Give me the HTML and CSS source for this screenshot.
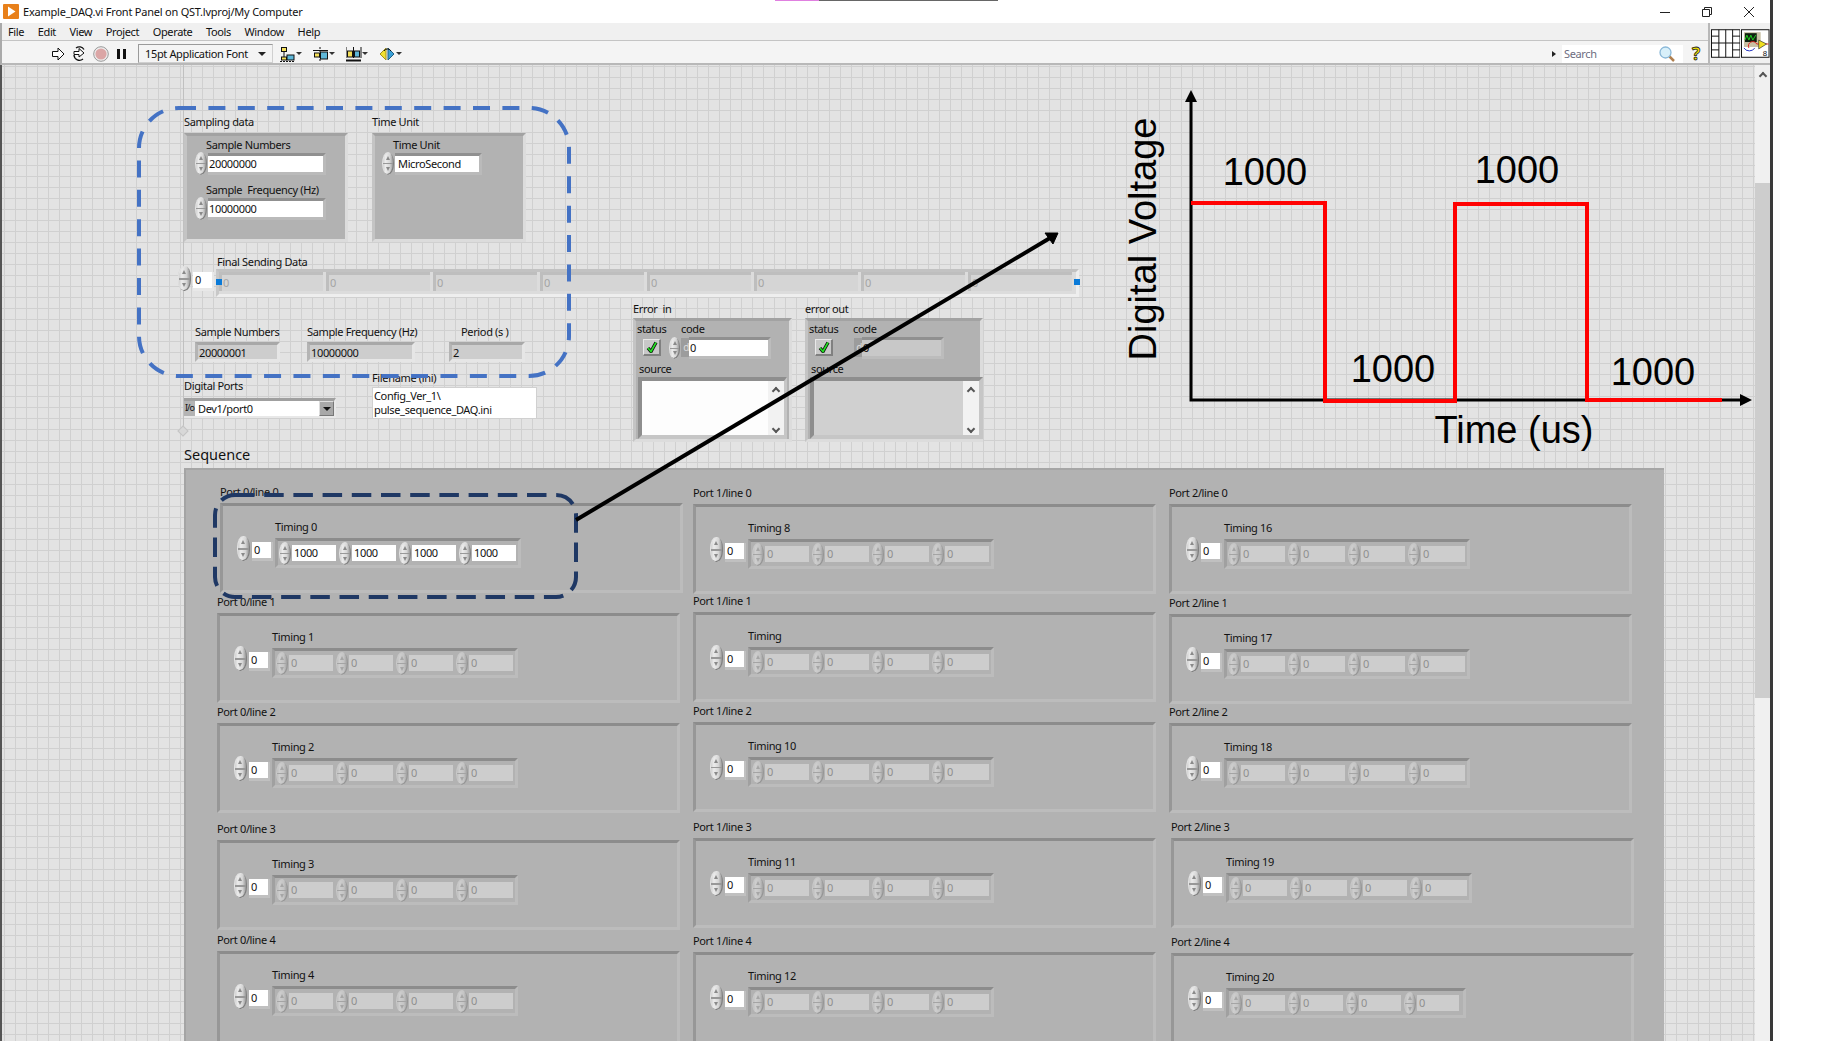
FILE: index.html
```html
<!DOCTYPE html>
<html lang="en">
<head>
    <meta charset="UTF-8">
    <title>Example_DAQ.vi Front Panel on QST.lvproj/My Computer</title>
    <link rel="stylesheet" href="styles.css">
</head>
<body>
<div class="window">
    <div class="titlebar">
        <svg class="app-icon" width="16" height="15" viewBox="0 0 16 15"><rect width="16" height="15" rx="1" fill="#e8801a"/><path d="M5 2.5 L12.5 7.5 L5 12.5 Z" fill="#fff"/></svg>
        <span class="title">Example_DAQ.vi Front Panel on QST.lvproj/My Computer</span>
        <div class="win-buttons">
            <svg width="12" height="12" viewBox="0 0 12 12"><path d="M1 6.5 H11" stroke="#222" stroke-width="1"/></svg>
            <svg width="12" height="12" viewBox="0 0 12 12"><path d="M1.5 3.5 H8.5 V10.5 H1.5 Z M3.5 3.5 V1.5 H10.5 V8.5 H8.5" fill="none" stroke="#222"/></svg>
            <svg width="12" height="12" viewBox="0 0 12 12"><path d="M1 1 L11 11 M11 1 L1 11" stroke="#222" stroke-width="1"/></svg>
        </div>
    </div>

    <div class="head">
        <div class="bars">
            <ul class="menu">
                <li>File</li><li>Edit</li><li>View</li><li>Project</li><li>Operate</li><li>Tools</li><li>Window</li><li>Help</li>
            </ul>
            <div class="toolbar">
                <svg class="tool first" width="14" height="16" viewBox="0 0 14 16"><path d="M1.5 5.5 H7 V2 L13 8 L7 14 V10.5 H1.5 Z" fill="#fff" stroke="#111"/></svg>
                <svg class="tool" width="16" height="16" viewBox="0 0 16 16"><path d="M3 5.5 H8 V2.5 L13 7 L8 11 V8.5 H3 Z" fill="#fff" stroke="#111"/><path d="M3 9 A5.5 5.5 0 0 0 12 13 M13 3.5 A5.5 5.5 0 0 0 5 2" fill="none" stroke="#111" stroke-width="1.3"/></svg>
                <svg class="tool" width="16" height="16" viewBox="0 0 16 16"><circle cx="8" cy="8" r="7.3" fill="#eee" stroke="#999"/><circle cx="8" cy="8" r="5.6" fill="#dba6a6"/></svg>
                <span class="pause"></span>
                <div class="font-select"><span>15pt Application Font</span><span class="caret"></span></div>
                <svg class="tool align" width="22" height="16" viewBox="0 0 22 16"><rect x="1.5" y="1.5" width="5" height="4" fill="#f5e05a" stroke="#111"/><rect x="1.5" y="11" width="5" height="3" fill="#f5e05a" stroke="#111"/><rect x="7" y="9" width="7" height="5" fill="#5fb7d8" stroke="#111"/><path d="M4 6 V11" stroke="#111"/><path d="M0 15.5 H15" stroke="#111" stroke-dasharray="2 1"/><path d="M16 6 H22 L19 9 Z" fill="#333"/></svg>
                <svg class="tool align" width="22" height="16" viewBox="0 0 22 16"><rect x="1.5" y="7" width="5" height="4" fill="#f5e05a" stroke="#111"/><rect x="7.5" y="6" width="7" height="7" fill="#5fb7d8" stroke="#111"/><path d="M0 4.5 H15" stroke="#111"/><path d="M7 1 V15" stroke="#111" stroke-dasharray="2 1"/><path d="M16 6 H22 L19 9 Z" fill="#333"/></svg>
                <svg class="tool align" width="22" height="16" viewBox="0 0 22 16"><rect x="1.5" y="5" width="5" height="6" fill="#f5e05a" stroke="#111"/><rect x="8.5" y="5" width="5" height="6" fill="#5fb7d8" stroke="#111"/><path d="M0 1 V12 M15 1 V12 M7.5 1 V12" stroke="#111"/><path d="M0 14.5 H15" stroke="#111" stroke-width="2"/><path d="M16 6 H22 L19 9 Z" fill="#333"/></svg>
                <svg class="tool align" width="23" height="16" viewBox="0 0 23 16"><path d="M7 2 L1 8 L7 14 Z" fill="#f0e030" stroke="#a09020"/><path d="M9 2 L15 8 L9 14 Z" fill="#3aa0d8" stroke="#206080"/><path d="M5 5 A4 4 0 0 1 12 5" fill="none" stroke="#111"/><path d="M17 6 H23 L20 9 Z" fill="#333"/></svg>
                <div class="tool-right">
                    <span class="search-arrow"></span>
                    <div class="search">
                        <span>Search</span>
                        <svg width="16" height="16" viewBox="0 0 16 16"><path d="M9.5 9.5 L15 15" stroke="#b08050" stroke-width="2.5"/><circle cx="6.5" cy="6.5" r="5.5" fill="#d8f0fa" stroke="#8ab8d8" stroke-width="1.3"/></svg>
                    </div>
                    <span class="help">?</span>
                </div>
            </div>
        </div>
        <div class="vi-icons">
            <svg width="30" height="29" viewBox="0 0 30 29"><rect x=".5" y=".5" width="29" height="28" fill="#fff" stroke="#111"/><path d="M8 .5 V28.5 M15 .5 V28.5 M22 .5 V28.5 M.5 7 H8 M.5 14 H15 M.5 21 H8 M22 7 H29.5 M22 14 H29.5 M22 21 H29.5 M15 14 H22" fill="none" stroke="#111"/></svg>
            <svg width="29" height="29" viewBox="0 0 29 29"><rect x=".5" y=".5" width="28" height="28" fill="#fff" stroke="#111"/><rect x="3" y="3" width="17" height="15" fill="#c8c0a4"/><rect x="4" y="4" width="12" height="9" fill="#102010"/><path d="M4 11 L6 6 L8 11 L10 6 L12 11 L15 6" fill="none" stroke="#20d020"/><path d="M3 19 A6 5 0 0 0 14 19" fill="none" stroke="#2030c0"/><path d="M8 19 A4 4 0 0 1 16 15 L28 15" fill="none" stroke="#e02020"/><path d="M18 11 L26 15 L18 20 Z" fill="#f0e020" stroke="#333" stroke-width=".7"/><text x="22" y="27" class="vi-num">8</text></svg>
        </div>
    </div>

    <div class="body-row">
        <div class="panel">
            <span class="origin-v"></span>
            <span class="origin-d"></span>
            <div class="upper">
                <div class="ctl c-sampling">
                    <div class="lab lab-close">Sampling data</div>
                    <div class="box box-sampling">
                        <div class="lab sub">Sample Numbers</div>
                        <div class="num-row"><span class="spin"></span><span class="num num-wide">20000000</span></div>
                        <div class="lab sub lab-gap">Sample  Frequency (Hz)</div>
                        <div class="num-row"><span class="spin"></span><span class="num num-wide">10000000</span></div>
                    </div>
                </div>
                <div class="ctl c-unit">
                    <div class="lab lab-close">Time Unit</div>
                    <div class="box box-unit">
                        <div class="lab sub">Time Unit</div>
                        <div class="num-row"><span class="spin"></span><span class="num num-unit">MicroSecond</span></div>
                    </div>
                </div>

                <div class="ctl c-final">
                    <div class="idx final-idx"><span class="spin spin-big"></span><span class="idx-box">0</span></div>
                    <div>
                        <div class="lab final-lab">Final Sending Data</div>
                        <div class="final-arr">
                            <span class="final-cell">0</span><span class="final-cell">0</span><span class="final-cell">0</span><span class="final-cell">0</span><span class="final-cell">0</span><span class="final-cell">0</span><span class="final-cell">0</span><span class="final-cell">0</span>
                            <span class="handle handle-l"></span><span class="handle handle-r"></span>
                        </div>
                    </div>
                </div>

                <div class="ctl c-ind1"><div class="lab">Sample Numbers</div><div class="ind ind-n">20000001</div></div>
                <div class="ctl c-ind2"><div class="lab">Sample Frequency (Hz)</div><div class="ind ind-f">10000000</div></div>
                <div class="ctl c-ind3"><div class="lab lab-period">Period (s )</div><div class="ind ind-p">2</div></div>

                <div class="ctl c-ports">
                    <div class="lab lab-ports">Digital Ports</div>
                    <div class="ring"><span class="ring-io">I/o</span><span class="ring-val">Dev1/port0</span><span class="ring-btn"></span></div>
                </div>
                <div class="ctl c-file">
                    <div class="lab lab-tight">Filename (ini)</div>
                    <div class="path">Config_Ver_1\<br>pulse_sequence_DAQ.ini</div>
                </div>

                <div class="ctl c-err-in">
                    <div class="lab lab-tight">Error  in</div>
                    <div class="box err-box">
                        <div class="err-top">
                            <div class="err-status"><div class="lab">status</div><span class="check"><svg width="12" height="12" viewBox="0 0 12 12"><path d="M2 7 L5 10.5 L10 1.5" fill="none" stroke="#111" stroke-width="3.4"/><path d="M2 7 L5 10.5 L10 1.5" fill="none" stroke="#22e022" stroke-width="1.6"/></svg></span></div>
                            <div>
                                <div class="lab">code</div>
                                <div class="err-code"><span class="spin spin-small"></span><span class="dtab">d</span><span class="code-val">0</span></div>
                            </div>
                        </div>
                        <div class="lab lab-source">source</div>
                        <div class="source"><div class="source-text"></div><div class="source-scroll"><span class="chev"></span><span class="chev chev-down"></span></div></div>
                    </div>
                </div>
                <div class="ctl c-err-out">
                    <div class="lab lab-tight">error out</div>
                    <div class="box err-box err-box-out">
                        <div class="err-top">
                            <div class="err-status"><div class="lab">status</div><span class="check"><svg width="12" height="12" viewBox="0 0 12 12"><path d="M2 7 L5 10.5 L10 1.5" fill="none" stroke="#111" stroke-width="3.4"/><path d="M2 7 L5 10.5 L10 1.5" fill="none" stroke="#22e022" stroke-width="1.6"/></svg></span></div>
                            <div>
                                <div class="lab">code</div>
                                <div class="err-code err-code-out"><span class="dtab">d</span><span class="code-val code-val-out">0</span></div>
                            </div>
                        </div>
                        <div class="lab lab-source">source</div>
                        <div class="source source-out"><div class="source-text source-text-out"></div><div class="source-scroll"><span class="chev"></span><span class="chev chev-down"></span></div></div>
                    </div>
                </div>
            </div>

            <div class="seq-title">Sequence</div>
            <div class="sequence">
                <!-- Port 0 -->
                <div class="cluster up1 right3">
                    <div class="lab">Port 0/line 0</div>
                    <div class="frame"><div class="idx"><span class="spin spin-big"></span><span class="idx-box">0</span></div><div><div class="lab">Timing 0</div><div class="arr"><span class="spin"></span><span class="cell cell-on">1000</span><span class="spin"></span><span class="cell cell-on">1000</span><span class="spin"></span><span class="cell cell-on">1000</span><span class="spin"></span><span class="cell cell-on">1000</span></div></div></div>
                </div>
                <div class="cluster">
                    <div class="lab">Port 0/line 1</div>
                    <div class="frame"><div class="idx"><span class="spin spin-big"></span><span class="idx-box">0</span></div><div><div class="lab">Timing 1</div><div class="arr"><span class="spin off"></span><span class="cell">0</span><span class="spin off"></span><span class="cell">0</span><span class="spin off"></span><span class="cell">0</span><span class="spin off"></span><span class="cell">0</span></div></div></div>
                </div>
                <div class="cluster">
                    <div class="lab">Port 0/line 2</div>
                    <div class="frame"><div class="idx"><span class="spin spin-big"></span><span class="idx-box">0</span></div><div><div class="lab">Timing 2</div><div class="arr"><span class="spin off"></span><span class="cell">0</span><span class="spin off"></span><span class="cell">0</span><span class="spin off"></span><span class="cell">0</span><span class="spin off"></span><span class="cell">0</span></div></div></div>
                </div>
                <div class="cluster down2">
                    <div class="lab">Port 0/line 3</div>
                    <div class="frame"><div class="idx"><span class="spin spin-big"></span><span class="idx-box">0</span></div><div><div class="lab">Timing 3</div><div class="arr"><span class="spin off"></span><span class="cell">0</span><span class="spin off"></span><span class="cell">0</span><span class="spin off"></span><span class="cell">0</span><span class="spin off"></span><span class="cell">0</span></div></div></div>
                </div>
                <div class="cluster up1">
                    <div class="lab">Port 0/line 4</div>
                    <div class="frame"><div class="idx"><span class="spin spin-big"></span><span class="idx-box">0</span></div><div><div class="lab">Timing 4</div><div class="arr"><span class="spin off"></span><span class="cell">0</span><span class="spin off"></span><span class="cell">0</span><span class="spin off"></span><span class="cell">0</span><span class="spin off"></span><span class="cell">0</span></div></div></div>
                </div>
                <!-- Port 1 -->
                <div class="cluster">
                    <div class="lab">Port 1/line 0</div>
                    <div class="frame"><div class="idx"><span class="spin spin-big"></span><span class="idx-box">0</span></div><div><div class="lab">Timing 8</div><div class="arr"><span class="spin off"></span><span class="cell">0</span><span class="spin off"></span><span class="cell">0</span><span class="spin off"></span><span class="cell">0</span><span class="spin off"></span><span class="cell">0</span></div></div></div>
                </div>
                <div class="cluster up1">
                    <div class="lab">Port 1/line 1</div>
                    <div class="frame"><div class="idx"><span class="spin spin-big"></span><span class="idx-box">0</span></div><div><div class="lab">Timing</div><div class="arr"><span class="spin off"></span><span class="cell">0</span><span class="spin off"></span><span class="cell">0</span><span class="spin off"></span><span class="cell">0</span><span class="spin off"></span><span class="cell">0</span></div></div></div>
                </div>
                <div class="cluster up1">
                    <div class="lab">Port 1/line 2</div>
                    <div class="frame"><div class="idx"><span class="spin spin-big"></span><span class="idx-box">0</span></div><div><div class="lab">Timing 10</div><div class="arr"><span class="spin off"></span><span class="cell">0</span><span class="spin off"></span><span class="cell">0</span><span class="spin off"></span><span class="cell">0</span><span class="spin off"></span><span class="cell">0</span></div></div></div>
                </div>
                <div class="cluster">
                    <div class="lab">Port 1/line 3</div>
                    <div class="frame"><div class="idx"><span class="spin spin-big"></span><span class="idx-box">0</span></div><div><div class="lab">Timing 11</div><div class="arr"><span class="spin off"></span><span class="cell">0</span><span class="spin off"></span><span class="cell">0</span><span class="spin off"></span><span class="cell">0</span><span class="spin off"></span><span class="cell">0</span></div></div></div>
                </div>
                <div class="cluster">
                    <div class="lab">Port 1/line 4</div>
                    <div class="frame"><div class="idx"><span class="spin spin-big"></span><span class="idx-box">0</span></div><div><div class="lab">Timing 12</div><div class="arr"><span class="spin off"></span><span class="cell">0</span><span class="spin off"></span><span class="cell">0</span><span class="spin off"></span><span class="cell">0</span><span class="spin off"></span><span class="cell">0</span></div></div></div>
                </div>
                <!-- Port 2 -->
                <div class="cluster">
                    <div class="lab">Port 2/line 0</div>
                    <div class="frame"><div class="idx"><span class="spin spin-big"></span><span class="idx-box">0</span></div><div><div class="lab">Timing 16</div><div class="arr"><span class="spin off"></span><span class="cell">0</span><span class="spin off"></span><span class="cell">0</span><span class="spin off"></span><span class="cell">0</span><span class="spin off"></span><span class="cell">0</span></div></div></div>
                </div>
                <div class="cluster down1">
                    <div class="lab">Port 2/line 1</div>
                    <div class="frame"><div class="idx"><span class="spin spin-big"></span><span class="idx-box">0</span></div><div><div class="lab">Timing 17</div><div class="arr"><span class="spin off"></span><span class="cell">0</span><span class="spin off"></span><span class="cell">0</span><span class="spin off"></span><span class="cell">0</span><span class="spin off"></span><span class="cell">0</span></div></div></div>
                </div>
                <div class="cluster">
                    <div class="lab">Port 2/line 2</div>
                    <div class="frame"><div class="idx"><span class="spin spin-big"></span><span class="idx-box">0</span></div><div><div class="lab">Timing 18</div><div class="arr"><span class="spin off"></span><span class="cell">0</span><span class="spin off"></span><span class="cell">0</span><span class="spin off"></span><span class="cell">0</span><span class="spin off"></span><span class="cell">0</span></div></div></div>
                </div>
                <div class="cluster right2">
                    <div class="lab">Port 2/line 3</div>
                    <div class="frame"><div class="idx"><span class="spin spin-big"></span><span class="idx-box">0</span></div><div><div class="lab">Timing 19</div><div class="arr"><span class="spin off"></span><span class="cell">0</span><span class="spin off"></span><span class="cell">0</span><span class="spin off"></span><span class="cell">0</span><span class="spin off"></span><span class="cell">0</span></div></div></div>
                </div>
                <div class="cluster down1 right2">
                    <div class="lab">Port 2/line 4</div>
                    <div class="frame"><div class="idx"><span class="spin spin-big"></span><span class="idx-box">0</span></div><div><div class="lab">Timing 20</div><div class="arr arr-tight"><span class="spin off"></span><span class="cell">0</span><span class="spin off"></span><span class="cell">0</span><span class="spin off"></span><span class="cell">0</span><span class="spin off"></span><span class="cell">0</span></div></div></div>
                </div>
            </div>
        </div>
        <div class="scrollbar">
            <span class="chev"></span>
            <div class="thumb"></div>
        </div>
    </div>

    <span class="taskstrip"></span>

    <svg class="overlay" width="1773" height="1041" viewBox="0 0 1773 1041">
        <rect x="139" y="108" width="430" height="268" rx="40" class="dash-blue"/>
        <rect x="215" y="495" width="361" height="102" rx="20" class="dash-navy"/>
        <path d="M576 520 L1050 238" stroke="#000" stroke-width="4"/>
        <path d="M1058 233 L1045 233 L1053 244 Z" fill="#000" stroke="#000"/>

        <path d="M1191 98 V400 H1744" fill="none" stroke="#000" stroke-width="3"/>
        <path d="M1191 90 L1185 102 H1197 Z" fill="#000"/>
        <path d="M1752 400 L1740 394 V406 Z" fill="#000"/>
        <path d="M1191 203 H1325 V401 H1455 V204 H1587 V400 H1722" fill="none" stroke="#f00" stroke-width="4"/>

        <text x="1265" y="185" class="chart-text">1000</text>
        <text x="1517" y="183" class="chart-text">1000</text>
        <text x="1393" y="382" class="chart-text">1000</text>
        <text x="1653" y="385" class="chart-text">1000</text>
        <text x="1514" y="443" class="chart-text">Time (us)</text>
        <text transform="translate(1156 239) rotate(-90)" class="chart-text">Digital Voltage</text>
    </svg>
</div>
</body>
</html>
```
FILE: styles.css
```css
* {
	box-sizing: border-box;
}

html, body {
	margin: 0;
	padding: 0;
	height: 100%;
	background: #fff;
	overflow: hidden;
}

body {
	font-family: "Noto Sans", "Open Sans", sans-serif;
	font-size: 11px;
	letter-spacing: -0.35px;
	color: #111;
}

.window {
	position: relative;
	width: 1773px;
	height: 1041px;
	display: flex;
	flex-direction: column;
	border-right: 3px solid #3a3a3a;
	overflow: hidden;
}

/* title bar */
.titlebar {
	height: 23px;
	display: flex;
	align-items: center;
	padding-left: 3px;
	background: #fff;
}

.title {
	margin-left: 4px;
	letter-spacing: -0.22px;
}

.win-buttons {
	margin-left: auto;
	display: flex;
	gap: 30px;
	padding-right: 15px;
}

.taskstrip {
	position: absolute;
	left: 775px;
	top: 0;
	width: 223px;
	height: 1px;
	background: linear-gradient(90deg, #e080e0 44px, #666 44px);
}

/* menu + toolbar */
.head {
	height: 42px;
	display: flex;
	background: #f0f0f0;
	border-left: 2px solid #aaa;
	border-bottom: 2px solid #b8b8b8;
}

.bars {
	flex: 1;
	display: flex;
	flex-direction: column;
}

.menu {
	list-style: none;
	margin: 0;
	padding: 0 0 0 6px;
	height: 18px;
	display: flex;
	align-items: center;
	background: #f0f0f0;
	border-bottom: 1px solid #c4c4c4;
}

.menu li {
	margin-right: 13.5px;
}

.toolbar {
	flex: 1;
	display: flex;
	align-items: center;
	padding-top: 3px;
	background: #f4f4f4;
}

.tool {
	margin-right: 6px;
}

.tool.first {
	margin-left: 49px;
}

.tool.align {
	margin-right: 11px;
}

.pause {
	width: 9px;
	height: 10px;
	margin: 0 12px 0 2px;
	border-left: 3px solid #111;
	border-right: 3px solid #111;
}

.font-select {
	width: 135px;
	height: 19px;
	margin-right: 7px;
	padding: 0 6px;
	display: flex;
	align-items: center;
	justify-content: space-between;
	white-space: nowrap;
	background: #f4f4f4;
	border: 1px solid #9a9a9a;
	border-right-color: #d0d0d0;
	border-bottom-color: #d0d0d0;
}

.caret {
	width: 0;
	height: 0;
	border-left: 4px solid transparent;
	border-right: 4px solid transparent;
	border-top: 4px solid #222;
}

.tool-right {
	margin-left: auto;
	display: flex;
	align-items: center;
}

.search-arrow {
	width: 0;
	height: 0;
	margin-right: 6px;
	border-top: 3px solid transparent;
	border-bottom: 3px solid transparent;
	border-left: 4px solid #222;
}

.search {
	width: 121px;
	height: 18px;
	display: flex;
	align-items: center;
	justify-content: space-between;
	padding: 0 8px 0 2px;
	background: #fff;
	color: #6d6d80;
}

.help {
	width: 24px;
	margin-left: 1px;
	text-align: center;
	font-size: 17px;
	font-weight: 700;
	line-height: 18px;
	color: #f4e400;
	-webkit-text-stroke: 0.8px #222;
}

.vi-icons {
	width: 62px;
	padding: 6px 0 0 1px;
	display: flex;
	gap: 1px;
	align-items: flex-start;
	border-left: 2px solid #b8b8b8;
}

.vi-num {
	font-family: "Liberation Sans", sans-serif;
	font-size: 8px;
	fill: #111;
}

/* front panel */
.body-row {
	flex: 1;
	display: flex;
	min-height: 0;
}

.panel {
	position: relative;
	flex: 1;
	display: flex;
	flex-direction: column;
	border-left: 2px solid #555;
	background-color: #e3e3e3;
	background-image:
		linear-gradient(90deg, #d0d0d0 1px, transparent 1px),
		linear-gradient(#d0d0d0 1px, transparent 1px);
	background-size: 11px 11px;
	background-position: 2px 1px;
	overflow: hidden;
}

.origin-v {
	position: absolute;
	left: 181px;
	top: 0;
	width: 1px;
	height: 366px;
	background: #c0c0c0;
}

.origin-d {
	position: absolute;
	left: 177px;
	top: 362px;
	width: 8px;
	height: 8px;
	background: #d8d8d8;
	border: 1px solid #c4c4c4;
	transform: rotate(45deg);
}

.scrollbar {
	width: 15px;
	display: flex;
	flex-direction: column;
	align-items: center;
	padding-top: 5px;
	background: #f0f0f0;
}

.thumb {
	width: 100%;
	height: 515px;
	margin-top: 104px;
	background: #cdcdcd;
}

.chev {
	display: block;
	width: 6px;
	height: 6px;
	margin-top: 3px;
	border-left: 2px solid #555;
	border-top: 2px solid #555;
	transform: rotate(45deg);
}

.chev-down {
	margin-top: auto;
	margin-bottom: 3px;
	transform: rotate(225deg);
}

.upper {
	position: relative;
	height: 380px;
	flex: none;
}

.ctl {
	position: absolute;
}

.lab {
	height: 16px;
	line-height: 16px;
	white-space: pre;
}

.lab-close {
	margin-bottom: 3px;
}

.lab-tight {
	margin-bottom: 1px;
}

/* raised / sunk boxes */
.box {
	background: #b2b2b2;
	border-style: solid;
	border-width: 3px;
	border-color: #a2a2a2 #dcdcdc #dcdcdc #c4c4c4;
}

.c-sampling {
	left: 182px;
	top: 49px;
}

.box-sampling {
	width: 164px;
	height: 109px;
	margin-left: 0;
	padding: 1px 0 0 8px;
}

.c-unit {
	left: 370px;
	top: 49px;
}

.box-unit {
	width: 154px;
	height: 109px;
	padding: 1px 0 0 7px;
}

.sub {
	margin-left: 11px;
	height: 15px;
	line-height: 15px;
}

.lab-gap {
	margin-top: 7px;
}

.num-row {
	display: flex;
	align-items: center;
	gap: 1px;
	height: 23px;
}

.num {
	display: flex;
	align-items: center;
	height: 22px;
	padding-left: 1px;
	background: #fff;
	background-clip: padding-box;
	border-style: solid;
	border-width: 3px 3px 3px 0;
	border-color: #909090 #bababa #bababa #bababa;
}

.num-wide {
	width: 118px;
}

.num-unit {
	width: 87px;
	padding-left: 3px;
}

/* spinners */
.spin {
	position: relative;
	flex: none;
	display: block;
	width: 12px;
	height: 23px;
	border-radius: 6px / 11px;
	background:
		linear-gradient(transparent 48%, #989898 48%, #989898 54%, transparent 54%),
		linear-gradient(90deg, #c6c6c6, #ececec 30%, #d6d6d6 65%, #868686);
	box-shadow: inset -1px -1px 0 #808080, inset 1px 1px 0 #e2e2e2;
}

.spin::before,
.spin::after {
	content: "";
	position: absolute;
	left: 3.5px;
	width: 0;
	height: 0;
	border-left: 2.5px solid transparent;
	border-right: 2.5px solid transparent;
}

.spin::before {
	top: 4px;
	border-bottom: 4px solid #8a8a8a;
}

.spin::after {
	bottom: 4px;
	border-top: 4px solid #8a8a8a;
}

.spin-big {
	width: 13px;
	height: 25px;
}

.spin-small {
	width: 11px;
	height: 22px;
}

.spin.off {
	background:
		linear-gradient(transparent 48%, #a4a4a4 48%, #a4a4a4 54%, transparent 54%),
		linear-gradient(90deg, #b8b8b8, #cecece 30%, #c4c4c4 65%, #969696);
	box-shadow: inset -1px -1px 0 #969696, inset 1px 1px 0 #c8c8c8;
}

.spin.off::before {
	border-bottom-color: #a6a6a6;
}

.spin.off::after {
	border-top-color: #a6a6a6;
}

/* array index */
.idx {
	flex: none;
	display: flex;
	align-items: center;
	gap: 2px;
	height: 25px;
}

.idx-box {
	width: 21px;
	height: 19px;
	margin-top: 5px;
	padding-left: 2px;
	line-height: 16px;
	background: #fff;
	background-clip: padding-box;
	border-style: solid;
	border-width: 0 2px 3px 0;
	border-color: #c0c0c0;
}

/* final sending data */
.c-final {
	left: 176px;
	top: 189px;
	display: flex;
	gap: 2px;
}

.final-idx {
	margin-top: 12px;
}

.final-idx .idx-box {
	background-color: #fff;
	border-color: #e8e8e8;
}

.final-lab {
	margin-left: 1px;
	height: 15px;
	line-height: 15px;
}

.final-arr {
	position: relative;
	width: 863px;
	height: 28px;
	display: flex;
	gap: 3px;
	background: #dcdcdc;
	border-style: solid;
	border-width: 3px;
	border-color: #c2c2c2 #eee #eee #c8c8c8;
}

.final-cell {
	width: 104px;
	height: 19px;
	padding-left: 1px;
	line-height: 16px;
	color: #a4a4a4;
	background: #d5d5d5;
	background-clip: padding-box;
	border-left: 3px solid #bebebe;
	border-top: 3px solid #bebebe;
}

.handle {
	position: absolute;
	top: 7px;
	width: 6px;
	height: 6px;
	background: #0a7ad8;
}

.handle-l {
	left: -3px;
}

.handle-r {
	right: -4px;
}

/* indicators */
.c-ind1 {
	left: 193px;
	top: 259px;
}

.c-ind2 {
	left: 305px;
	top: 259px;
}

.c-ind3 {
	left: 447px;
	top: 259px;
}

.lab-period {
	margin-left: 12px;
}

.ind {
	height: 20px;
	margin-top: 2px;
	padding-left: 1px;
	line-height: 15px;
	background: #cdcdcd;
	border-style: solid;
	border-width: 3px;
	border-color: #a8a8a8 #e6e6e6 #e6e6e6 #b4b4b4;
}

.ind-n {
	width: 85px;
}

.ind-f {
	width: 108px;
}

.ind-p {
	width: 76px;
}

/* ports and filename */
.c-ports {
	left: 182px;
	top: 313px;
}

.lab-ports {
	margin-bottom: 4px;
}

.ring {
	width: 152px;
	height: 20px;
	display: flex;
	background: #b4b4b4;
	border-top: 3px solid #a0a0a0;
	border-right: 2px solid #e8e8e8;
	border-bottom: 2px solid #e8e8e8;
}

.ring-io {
	width: 11px;
	font-size: 9px;
	line-height: 14px;
	text-align: center;
	letter-spacing: -1px;
}

.ring-val {
	flex: 1;
	padding-left: 3px;
	line-height: 15px;
	background: #fff;
}

.ring-btn {
	position: relative;
	width: 15px;
	background: #a8a8a8;
	border: 1px solid #777;
	border-top-color: #ddd;
	border-left-color: #ddd;
}

.ring-btn::after {
	content: "";
	position: absolute;
	left: 3px;
	top: 5px;
	border-left: 4px solid transparent;
	border-right: 4px solid transparent;
	border-top: 4px solid #111;
}

.c-file {
	left: 370px;
	top: 305px;
}

.path {
	width: 165px;
	height: 32px;
	padding: 1px 0 0 1px;
	line-height: 14px;
	background: #fff;
	border: 1px solid #d0d0d0;
}

/* error clusters */
.c-err-in {
	left: 631px;
	top: 236px;
}

.c-err-out {
	left: 803px;
	top: 236px;
}

.err-box {
	position: relative;
	width: 159px;
	height: 124px;
	padding-left: 1px;
}

.err-box-out {
	width: 178px;
}

.err-top {
	display: flex;
}

.err-status {
	width: 44px;
}

.check {
	display: flex;
	align-items: center;
	justify-content: center;
	width: 18px;
	height: 17px;
	margin: 2px 0 0 6px;
	background: #c8c8c8;
	border-style: solid;
	border-width: 1px 2px 2px 1px;
	border-color: #e8e8e8 #808080 #808080 #e8e8e8;
}

.err-code {
	display: flex;
	align-items: center;
	margin: -1px 0 0 -12px;
	height: 23px;
}

.dtab {
	width: 8px;
	height: 19px;
	margin-left: 1px;
	color: #ddd;
	font-size: 10px;
	line-height: 18px;
	text-align: right;
	background: #9c9c9c;
}

.code-val {
	width: 82px;
	height: 22px;
	padding-left: 1px;
	line-height: 16px;
	background: #fff;
	background-clip: padding-box;
	border-style: solid;
	border-width: 3px 3px 3px 0;
	border-color: #909090 #bcbcbc #bcbcbc;
}

.err-code-out {
	margin: -1px 0 0 0;
}

.code-val-out {
	background-color: #c8c8c8;
}

.lab-source {
	margin: 2px 0 0 2px;
}

.source {
	display: flex;
	width: 149px;
	height: 62px;
	margin-left: 1px;
	border-style: solid;
	border-width: 4px 3px 4px 4px;
	border-color: #8e8e8e #c6c6c6 #c6c6c6 #8e8e8e;
}

.source-out {
	width: 173px;
	margin-left: 1px;
	border-right-width: 4px;
}

.source-text {
	flex: 1;
	background: #fdfdfd;
}

.source-text-out {
	background: #d0d0d0;
}

.source-scroll {
	width: 16px;
	display: flex;
	flex-direction: column;
	align-items: center;
	padding-top: 4px;
	background: #f2f2f2;
}

/* sequence cluster */
.seq-title {
	margin-left: 182px;
	height: 23px;
	font-size: 14.5px;
	line-height: 18px;
	letter-spacing: 0;
}

.sequence {
	flex: 1;
	margin-left: 182px;
	width: 1480px;
	padding: 15px 0 0 31px;
	display: grid;
	grid-auto-flow: column;
	grid-template-rows: 109px 110px 115px 114px 1fr;
	grid-template-columns: repeat(3, 476px);
	background: #b2b2b2;
	border-top: 2px solid #a6a6a6;
	border-left: 2px solid #a4a4a4;
	overflow: hidden;
}

.cluster {
	width: 463px;
}

.up1 {
	margin-top: -1px;
}

.down1 {
	margin-top: 1px;
}

.down2 {
	margin-top: 2px;
}

.right2 {
	margin-left: 2px;
}

.right3 {
	margin-left: 3px;
}

.frame {
	height: 90px;
	margin-top: 3px;
	padding: 13px 0 0 14px;
	display: flex;
	background: #b2b2b2;
	border-style: solid;
	border-width: 3px;
	border-color: #8c8c8c #bcbcbc #bcbcbc #979797;
}

.cluster:nth-child(5n) .frame {
	height: 110px;
}

.frame .idx {
	width: 38px;
	margin-top: 17px;
}

.arr {
	width: 246px;
	height: 30px;
	margin-top: 3px;
	padding-left: 1px;
	display: flex;
	align-items: center;
	gap: 1px;
	background: #b2b2b2;
	border-style: solid;
	border-width: 3px;
	border-color: #8c8c8c #bcbcbc #bcbcbc #a0a0a0;
}

.cell {
	width: 44px;
	height: 16px;
	margin-right: 2px;
	padding-left: 2px;
	line-height: 16px;
	color: #8f8f8f;
	background: #cdcdcd;
}

.cell-on {
	color: #111;
	background: #fff;
}

.arr-tight {
	width: 240px;
}

.arr-tight .cell {
	width: 42px;
}

/* drawings on top of the panel */
.overlay {
	position: absolute;
	left: 0;
	top: 0;
	pointer-events: none;
}

.dash-blue {
	fill: none;
	stroke: #4472c4;
	stroke-width: 4;
	stroke-dasharray: 17 12.4;
}

.dash-navy {
	fill: none;
	stroke: #1f3864;
	stroke-width: 4;
	stroke-dasharray: 19.5 9.7;
}

.chart-text {
	font-family: "Liberation Sans", Arial, sans-serif;
	font-size: 38px;
	letter-spacing: 0;
	text-anchor: middle;
	fill: #000;
}
```
